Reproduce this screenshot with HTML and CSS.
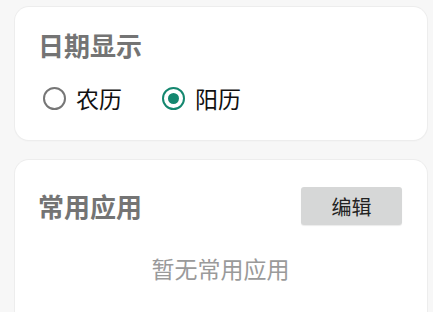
FILE: index.html
```html
<!DOCTYPE html>
<html lang="zh-CN">
<head>
<meta charset="utf-8">
<link rel="stylesheet" href="styles.css">
</head>
<body>
<div class="page">
  <section class="card card-date">
    <h2 class="card-title">日期显示</h2>
    <div class="radio-row">
      <label class="radio">
        <span class="radio-circle"></span>
        <span class="radio-label">农历</span>
      </label>
      <label class="radio radio-checked">
        <span class="radio-circle"><span class="radio-dot"></span></span>
        <span class="radio-label">阳历</span>
      </label>
    </div>
  </section>
  <section class="card card-apps">
    <div class="card-header">
      <h2 class="card-title">常用应用</h2>
      <button class="btn-edit">编辑</button>
    </div>
    <p class="empty-text">暂无常用应用</p>
  </section>
</div>
</body>
</html>
```
FILE: styles.css
```css
html, body {
  margin: 0;
  padding: 0;
  background: #f7f7f7;
  font-family: "Noto Sans CJK SC", "Noto Sans", sans-serif;
  overflow: hidden;
}
.page {
  display: flex;
  flex-direction: column;
  gap: 20px;
  padding: 7px 6px 0 15px;
}
.card {
  background: #ffffff;
  border-radius: 14px;
  box-shadow: 0 0 0 1px #ededed, 0 1px 2px rgba(0,0,0,0.05);
  padding: 0 24px 0 23px;
}
.card-date {
  padding-top: 22px;
  padding-bottom: 24px;
}
.card-title {
  margin: 0;
  font-size: 26px;
  line-height: 32px;
  font-weight: 700;
  color: #747474;
}
.radio-row {
  display: flex;
  align-items: center;
  gap: 40px;
  margin-top: 19px;
  height: 36px;
  padding-left: 5px;
}
.radio {
  display: flex;
  align-items: center;
  gap: 10px;
}
.radio-circle {
  box-sizing: border-box;
  width: 23px;
  height: 23px;
  border-radius: 50%;
  border: 2.5px solid #767676;
  display: flex;
  align-items: center;
  justify-content: center;
}
.radio-checked .radio-circle {
  border-color: #14876f;
}
.radio-dot {
  width: 11px;
  height: 11px;
  border-radius: 50%;
  background: #14876f;
}
.radio-label {
  font-size: 23px;
  line-height: 30px;
  color: #111111;
}
.card-apps {
  padding-top: 27px;
  height: 140px;
}
.card-header {
  display: flex;
  align-items: center;
  justify-content: space-between;
}
.btn-edit {
  width: 101px;
  height: 38px;
  margin-right: 1px;
  border: none;
  border-radius: 3px;
  background: #d6d7d7;
  box-shadow: 0 1px 1px rgba(0,0,0,0.08);
  font-family: inherit;
  font-size: 20px;
  color: #222222;
  padding: 0;
}
.empty-text {
  margin: 28px 0 0;
  text-align: center;
  font-size: 23px;
  line-height: 30px;
  color: #9a9a9a;
}
```
